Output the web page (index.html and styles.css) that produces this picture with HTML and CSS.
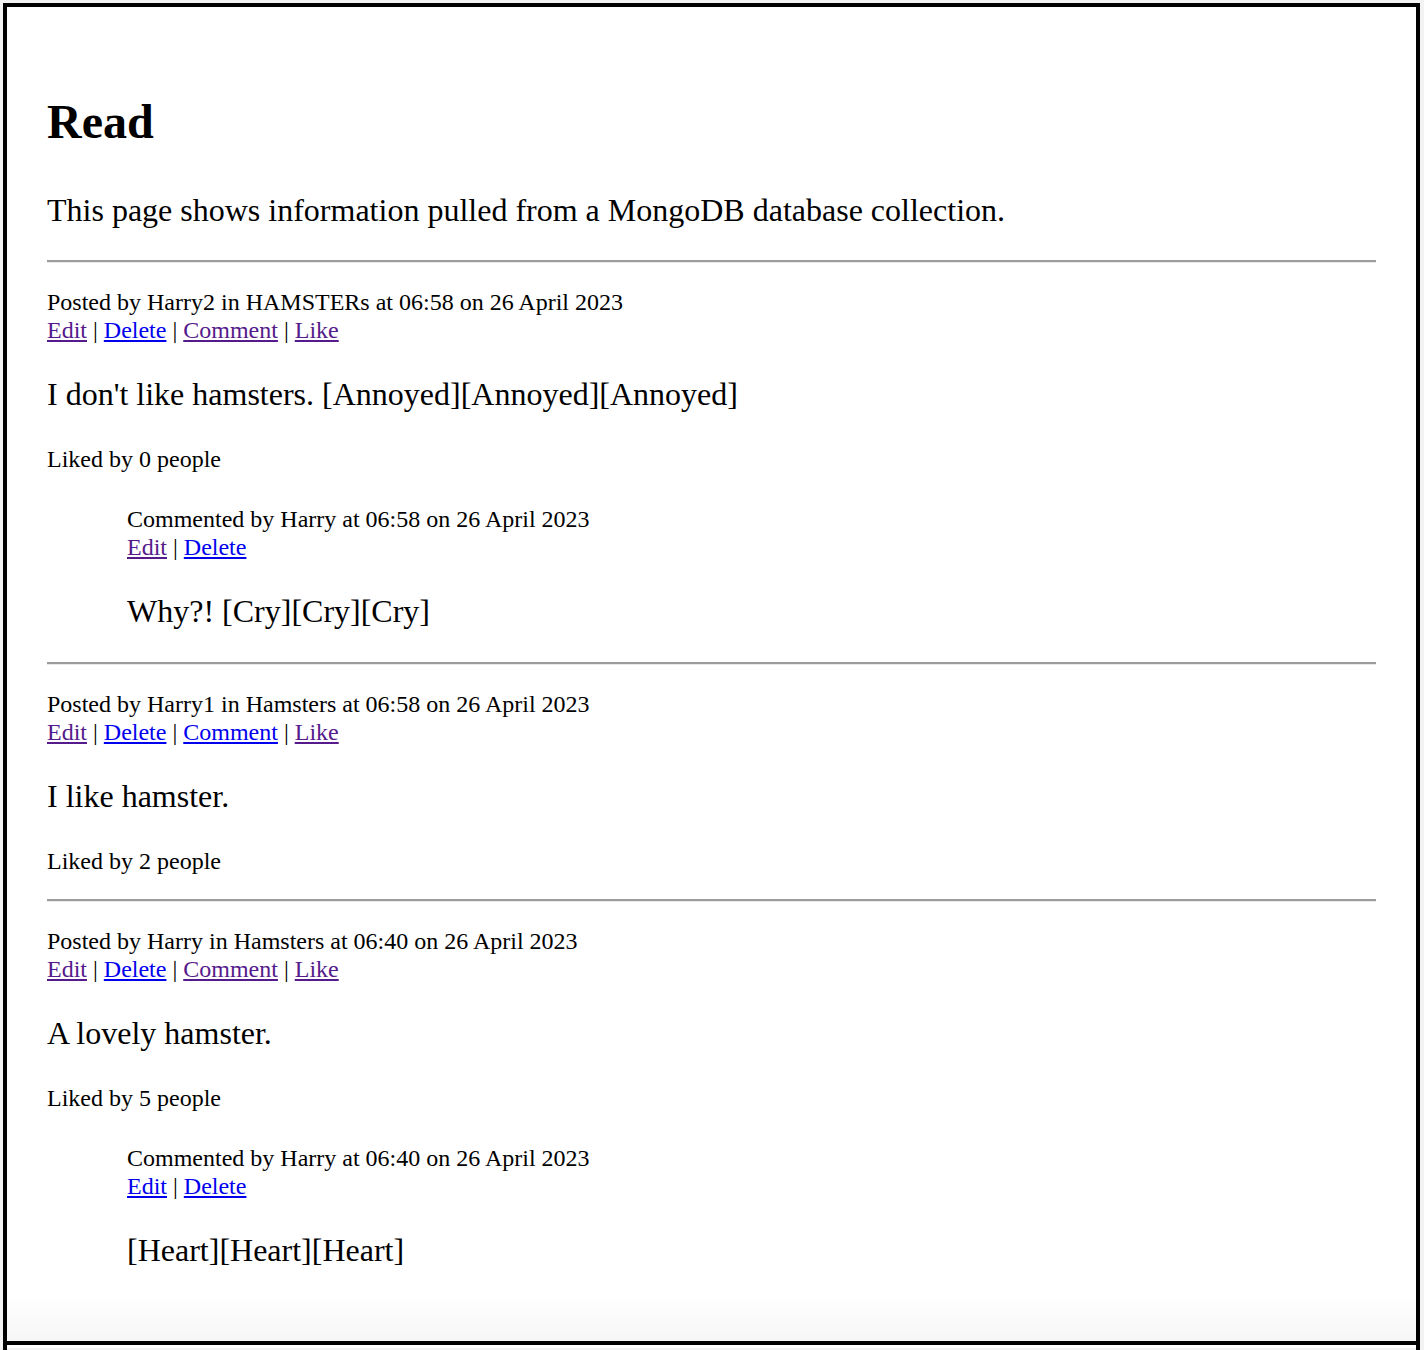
FILE: index.html
```html
<!DOCTYPE html>
<html lang="en">
<head>
<meta charset="utf-8">
<title>Read</title>
<link rel="stylesheet" href="styles.css">
</head>
<body>
<div class="frame">
  <main class="page">
    <h1 class="title">Read</h1>
    <p class="lead">This page shows information pulled from a MongoDB database collection.</p>
    <hr class="rule">

    <article class="post">
      <p class="meta">Posted by Harry2 in HAMSTERs at 06:58 on 26 April 2023<br>
        <a class="visited" href="#">Edit</a> | <a href="#">Delete</a> | <a class="visited" href="#">Comment</a> | <a class="visited" href="#">Like</a></p>
      <p class="body">I don't like hamsters. [Annoyed][Annoyed][Annoyed]</p>
      <p class="likes">Liked by 0 people</p>
      <div class="comment">
        <p class="meta">Commented by Harry at 06:58 on 26 April 2023<br>
          <a class="visited" href="#">Edit</a> | <a href="#">Delete</a></p>
        <p class="body">Why?! [Cry][Cry][Cry]</p>
      </div>
    </article>
    <hr class="rule">

    <article class="post">
      <p class="meta">Posted by Harry1 in Hamsters at 06:58 on 26 April 2023<br>
        <a class="visited" href="#">Edit</a> | <a href="#">Delete</a> | <a href="#">Comment</a> | <a class="visited" href="#">Like</a></p>
      <p class="body">I like hamster.</p>
      <p class="likes">Liked by 2 people</p>
    </article>
    <hr class="rule">

    <article class="post">
      <p class="meta">Posted by Harry in Hamsters at 06:40 on 26 April 2023<br>
        <a class="visited" href="#">Edit</a> | <a href="#">Delete</a> | <a class="visited" href="#">Comment</a> | <a class="visited" href="#">Like</a></p>
      <p class="body">A lovely hamster.</p>
      <p class="likes">Liked by 5 people</p>
      <div class="comment">
        <p class="meta">Commented by Harry at 06:40 on 26 April 2023<br>
          <a href="#">Edit</a> | <a href="#">Delete</a></p>
        <p class="body">[Heart][Heart][Heart]</p>
      </div>
    </article>
  </main>
</div>
</body>
</html>
```

FILE: styles.css
```css
* {
  box-sizing: border-box;
}

html {
  background: #f3f3f3;
}

body {
  margin: 0;
  font-family: "Liberation Serif", "Times New Roman", serif;
  color: #000;
}

.frame {
  margin: 0 4px 0 3px;
  min-height: 1350px;
  border-left: 4px solid #000;
  border-right: 4px solid #000;
  background: linear-gradient(to bottom, #fff 0, #fff 1345px, #f3f3f3 1345px);
}

.page {
  margin-top: 3px;
  height: 1342px;
  border-top: 4px solid #000;
  border-bottom: 4px solid #000;
  padding: 0 40px;
  overflow: hidden;
  display: flow-root;
  background: linear-gradient(to bottom, #fff calc(100% - 45px), #f6f6f6 100%);
}

.title {
  margin: 87px 0 43px;
  font-size: 48px;
  line-height: 55px;
  font-weight: bold;
}

.lead {
  margin: 0 0 31px;
  font-size: 32px;
  line-height: 37px;
}

.rule {
  margin: 24px 0 25px;
  height: 3px;
  border: 0;
  border-top: 2px solid #9c9c9c;
  border-bottom: 1px solid #e8e8e8;
}

.post {
  display: block;
}

.meta,
.likes {
  margin: 24px 0;
  font-size: 24px;
  line-height: 28px;
}

.body {
  margin: 32px 0;
  font-size: 32px;
  line-height: 37px;
}

.comment {
  margin: 32px 0 0 80px;
}

a {
  color: #0000ee;
  text-decoration: underline;
}

a.visited {
  color: #551a8b;
}
```
